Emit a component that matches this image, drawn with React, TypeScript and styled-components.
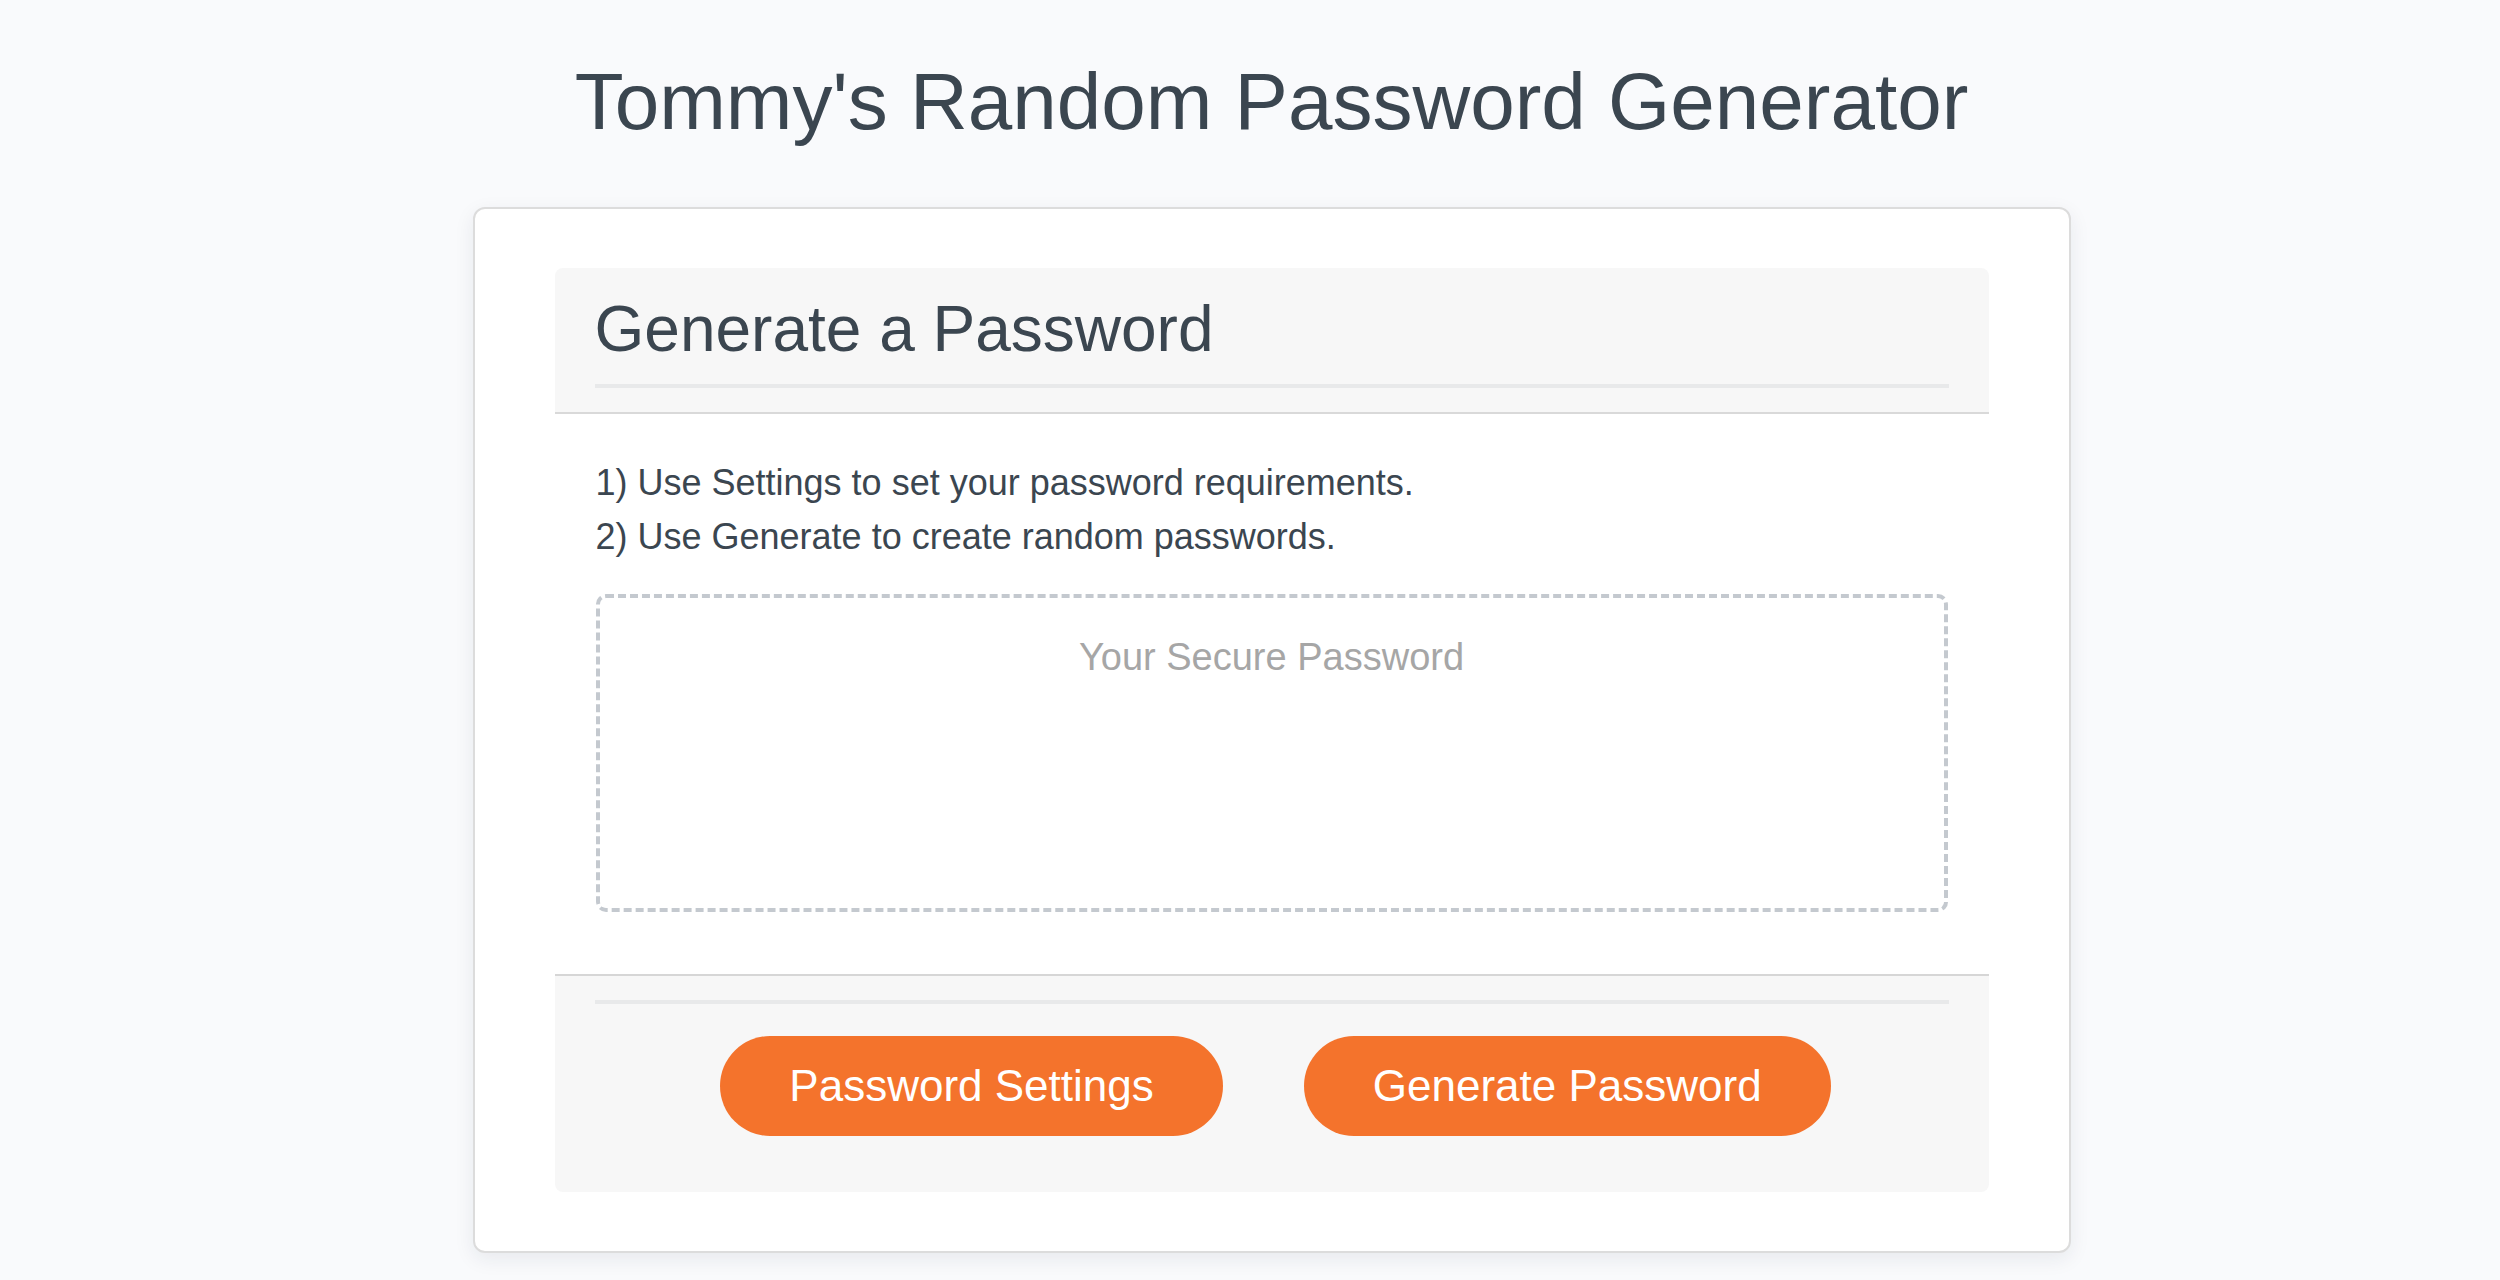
import styled, { createGlobalStyle } from "styled-components"

const GlobalStyle = createGlobalStyle`
  html, body {
    margin: 0;
    padding: 0;
    background: #f9fafc;
  }
  body {
    font-family: "Liberation Sans", Arial, Helvetica, sans-serif;
    color: #3b4650;
  }
  * {
    box-sizing: border-box;
  }
`

const Page = styled.main`
  min-height: 1280px;
  padding-left: 43px;
  display: flex;
  flex-direction: column;
  align-items: center;
`

const PageTitle = styled.h1`
  margin: 54px 0 57px;
  font-size: 80px;
  line-height: 96px;
  font-weight: 400;
  color: #3b4650;
`

const Card = styled.section`
  width: 1598px;
  background: #fff;
  border: 2px solid #dcdcdc;
  border-radius: 12px;
  box-shadow: 0 6px 20px rgba(30, 40, 60, 0.08);
  padding: 59px 80px;
`

const CardHeader = styled.header`
  background: #f7f7f7;
  border-radius: 8px 8px 0 0;
  border-bottom: 2px solid #d9d9d9;
  padding: 23px 40px 24px;
`

const CardTitle = styled.h2`
  margin: 0 0 16px;
  font-size: 64px;
  line-height: 1.2;
  font-weight: 400;
  color: #3b4650;
`

const Rule = styled.div<{ $gapBelow?: number }>`
  height: 4px;
  background: #e8e9ea;
  margin-bottom: ${(p) => p.$gapBelow ?? 0}px;
`

const CardBody = styled.div`
  padding: 42px 41px 62px;
`

const Step = styled.p`
  margin: 0;
  font-size: 36px;
  line-height: 54px;
  color: #3b4650;
`

const PasswordBox = styled.textarea`
  display: block;
  width: 100%;
  height: 318px;
  margin-top: 30px;
  padding: 32px 20px;
  border: 4px dashed #c4c9cf;
  border-radius: 10px;
  background: #fff;
  resize: none;
  outline: none;
  text-align: center;
  font-family: "Liberation Sans", Arial, sans-serif;
  font-size: 38px;
  line-height: 54px;
  color: #3b4650;

  &::placeholder {
    color: #a6a6a6;
  }
`

const CardFooter = styled.footer`
  background: #f7f7f7;
  border-top: 2px solid #d6d6d6;
  border-radius: 0 0 8px 8px;
  padding: 24px 40px 56px;
`

const ButtonRow = styled.div`
  display: flex;
  justify-content: center;
  gap: 81px;
  padding-left: 8px;
`

const ActionButton = styled.button`
  height: 100px;
  padding: 0 69px;
  border: none;
  border-radius: 50px;
  background: #f4732c;
  color: #fff;
  font-family: "Liberation Sans", Arial, sans-serif;
  font-size: 44px;
  line-height: 100px;
  cursor: pointer;
`

export default function App() {
  return (
    <>
      <GlobalStyle />
      <Page>
        <PageTitle>Tommy's Random Password Generator</PageTitle>
        <Card>
          <CardHeader>
            <CardTitle>Generate a Password</CardTitle>
            <Rule />
          </CardHeader>
          <CardBody>
            <Step>1) Use Settings to set your password requirements.</Step>
            <Step>2) Use Generate to create random passwords.</Step>
            <PasswordBox readOnly placeholder="Your Secure Password" />
          </CardBody>
          <CardFooter>
            <Rule $gapBelow={32} />
            <ButtonRow>
              <ActionButton>Password Settings</ActionButton>
              <ActionButton>Generate Password</ActionButton>
            </ButtonRow>
          </CardFooter>
        </Card>
      </Page>
    </>
  )
}
